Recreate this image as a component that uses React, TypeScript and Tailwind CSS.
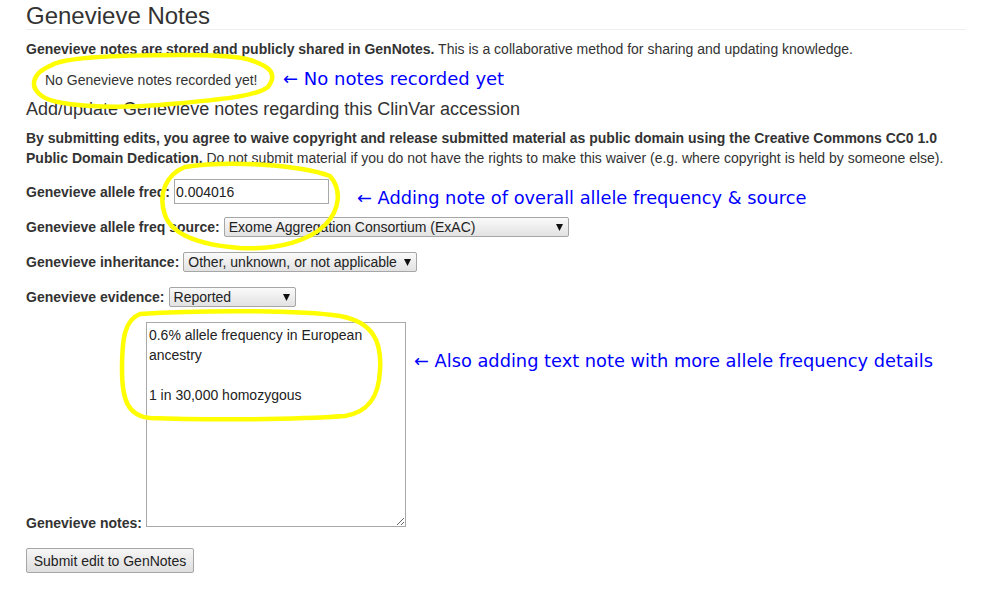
import React from "react";

function Sel({ value, width }: { value: string; width: number }) {
  return (
    <div className="relative h-[20px]" style={{ width }}>
      <select
        defaultValue={value}
        className="appearance-none w-full h-[20px] pl-[4px] pr-[18px] border border-[#a6a6a6] rounded-[2px] bg-gradient-to-b from-[#fafafa] to-[#e2e2e2] text-[14px] leading-[18px] text-[#222] font-['Liberation_Sans',Arial,sans-serif]"
      >
        <option>{value}</option>
      </select>
      <svg className="pointer-events-none absolute right-[6px] top-[7px]" width="7" height="7" viewBox="0 0 7 7">
        <path d="M0 0 H7 L3.5 7 Z" fill="#111" />
      </svg>
    </div>
  );
}

export default function App() {
  return (
    <div className="relative w-[987px] h-[595px] bg-white overflow-hidden font-['Liberation_Sans',Arial,sans-serif] text-[14px] leading-[20px] text-[#333]">
      <div className="ml-[26px] w-[940px] pt-[3px]">
        <h3 className="text-[24px] leading-[26.4px] border-b border-[#eee] font-normal">Genevieve Notes</h3>
        <p className="mt-[9px]">
          <b>Genevieve notes are stored and publicly shared in GenNotes.</b> This is a collaborative method for sharing and updating knowledge.
        </p>
        <div className="mt-[11px] pl-[19px]">No Genevieve notes recorded yet!</div>
        <h4 className="text-[18px] leading-[20px] mt-[9px] font-normal">Add/update Genevieve notes regarding this ClinVar accession</h4>
        <p className="mt-[9px]">
          <b>
            By submitting edits, you agree to waive copyright and release submitted material as public domain using the Creative Commons CC0 1.0 Public Domain Dedication.
          </b>{" "}
          Do not submit material if you do not have the rights to make this waiver (e.g. where copyright is held by someone else).
        </p>
        <div className="mt-[11px] flex items-center gap-[4px]">
          <label className="font-bold">Genevieve allele freq:</label>
          <input
            defaultValue="0.004016"
            className="w-[155px] h-[25px] border border-[#a9a9a9] pl-[1px] text-[14px] text-[#222] outline-none"
          />
        </div>
        <div className="mt-[13px] flex items-center gap-[4px]">
          <label className="font-bold">Genevieve allele freq source:</label>
          <Sel value="Exome Aggregation Consortium (ExAC)" width={345} />
        </div>
        <div className="mt-[15px] flex items-center gap-[4px]">
          <label className="font-bold">Genevieve inheritance:</label>
          <Sel value="Other, unknown, or not applicable" width={234} />
        </div>
        <div className="mt-[15px] flex items-center gap-[4px]">
          <label className="font-bold">Genevieve evidence:</label>
          <Sel value="Reported" width={127} />
        </div>
        <div className="mt-[15px] flex items-end gap-[4px]">
          <label className="font-bold leading-[14px] mb-[-3px]">Genevieve notes:</label>
          <textarea
            defaultValue={"0.6% allele frequency in European ancestry\n\n1 in 30,000 homozygous"}
            className="block w-[260px] h-[205px] border border-[#a9a9a9] p-[2px] text-[14px] leading-[20px] text-[#222] font-['Liberation_Sans',Arial,sans-serif] outline-none"
          />
        </div>
        <button className="mt-[21px] h-[25px] w-[168px] border border-[#a6a6a6] rounded-[2px] bg-gradient-to-b from-[#f6f6f6] to-[#dedede] text-[14px] text-[#222]">
          Submit edit to GenNotes
        </button>
      </div>

      <svg className="pointer-events-none absolute left-0 top-0" width="987" height="595" viewBox="0 0 987 595">
        <g fill="none" stroke="#ffff00" strokeWidth="4.5" strokeLinecap="round" strokeLinejoin="round">
          <path d="M 52 65 C 65 57, 120 55, 180 55 C 215 55, 240 56, 250 60 C 270 66, 278 74, 268 87 C 255 97, 215 100, 160 105 C 110 109, 55 106, 42 96 C 30 88, 30 74, 52 65 Z" />
          <path d="M 185 167 C 230 160, 300 165, 330 176 C 342 190, 340 210, 325 225 C 310 240, 280 250, 240 248 C 200 245, 172 235, 165 215 C 158 195, 165 175, 185 167 Z" />
          <path d="M 140 314 C 200 310, 300 310, 340 316 C 372 322, 382 340, 380 370 C 379 395, 370 412, 345 416 C 290 420, 200 420, 150 418 C 128 416, 122 400, 122 370 C 122 340, 124 320, 140 314 Z" />
        </g>
      </svg>

      <div className="absolute left-[283px] top-[67px] font-['DejaVu_Sans',sans-serif] text-[18px] leading-[24px] text-[#0000ff] whitespace-nowrap">
        ← No notes recorded yet
      </div>
      <div className="absolute left-[357px] top-[186px] font-['DejaVu_Sans',sans-serif] text-[17.8px] leading-[24px] text-[#0000ff] whitespace-nowrap">
        ← Adding note of overall allele frequency &amp; source
      </div>
      <div className="absolute left-[414px] top-[349px] font-['DejaVu_Sans',sans-serif] text-[17.8px] leading-[24px] text-[#0000ff] whitespace-nowrap">
        ← Also adding text note with more allele frequency details
      </div>
    </div>
  );
}
